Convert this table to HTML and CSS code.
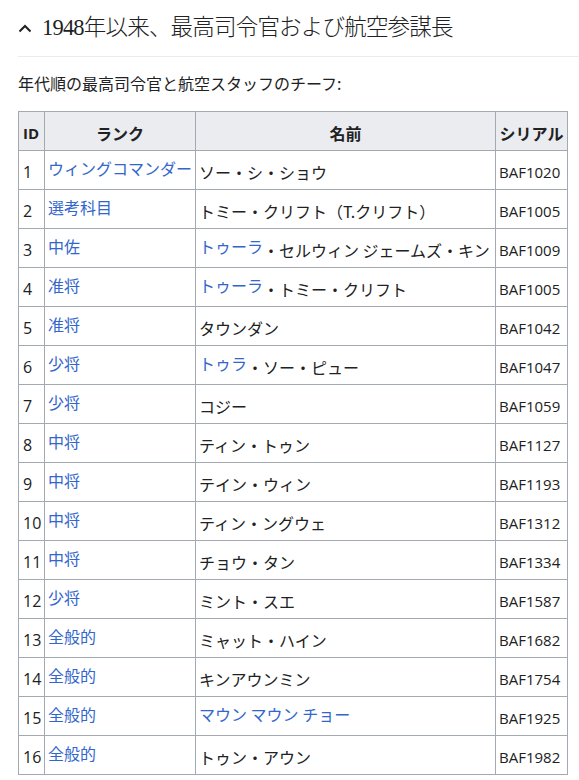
FILE: index.html
```html
<!DOCTYPE html>
<html lang="ja">
<head>
<meta charset="utf-8">
<title>1948年以来、最高司令官および航空参謀長</title>
<link rel="stylesheet" href="styles.css">
</head>
<body>
<div class="page">
  <h2 class="section-heading">
    <svg class="chevron" width="14" height="10" viewBox="0 0 14 10" aria-hidden="true"><polyline points="1.5,8.5 7,3 12.5,8.5" fill="none" stroke="#202122" stroke-width="2"/></svg>
    <span class="heading-text">1948年以来、最高司令官および航空参謀長</span>
  </h2>
  <p class="intro">年代順の最高司令官と航空スタッフのチーフ:</p>
  <table class="wikitable">
    <colgroup>
      <col class="c-id"><col class="c-rank"><col class="c-name"><col class="c-serial">
    </colgroup>
    <thead>
      <tr><th class="th-id">ID</th><th>ランク</th><th>名前</th><th>シリアル</th></tr>
    </thead>
    <tbody>
      <tr><td>1</td><td><a href="#">ウィングコマンダー</a></td><td>ソー・シ・ショウ</td><td>BAF1020</td></tr>
      <tr><td>2</td><td><a href="#">選考科目</a></td><td>トミー・クリフト（T.クリフト）</td><td>BAF1005</td></tr>
      <tr><td>3</td><td><a href="#">中佐</a></td><td><a href="#">トゥーラ</a>・セルウィン ジェームズ・キン</td><td>BAF1009</td></tr>
      <tr><td>4</td><td><a href="#">准将</a></td><td><a href="#">トゥーラ</a>・トミー・クリフト</td><td>BAF1005</td></tr>
      <tr><td>5</td><td><a href="#">准将</a></td><td>タウンダン</td><td>BAF1042</td></tr>
      <tr><td>6</td><td><a href="#">少将</a></td><td><a href="#">トゥラ</a>・ソー・ピュー</td><td>BAF1047</td></tr>
      <tr><td>7</td><td><a href="#">少将</a></td><td>コジー</td><td>BAF1059</td></tr>
      <tr><td>8</td><td><a href="#">中将</a></td><td>ティン・トゥン</td><td>BAF1127</td></tr>
      <tr><td>9</td><td><a href="#">中将</a></td><td>テイン・ウィン</td><td>BAF1193</td></tr>
      <tr><td>10</td><td><a href="#">中将</a></td><td>ティン・ングウェ</td><td>BAF1312</td></tr>
      <tr><td>11</td><td><a href="#">中将</a></td><td>チョウ・タン</td><td>BAF1334</td></tr>
      <tr><td>12</td><td><a href="#">少将</a></td><td>ミント・スエ</td><td>BAF1587</td></tr>
      <tr><td>13</td><td><a href="#">全般的</a></td><td>ミャット・ハイン</td><td>BAF1682</td></tr>
      <tr><td>14</td><td><a href="#">全般的</a></td><td>キンアウンミン</td><td>BAF1754</td></tr>
      <tr><td>15</td><td><a href="#">全般的</a></td><td><a href="#">マウン マウン チョー</a></td><td>BAF1925</td></tr>
      <tr><td>16</td><td><a href="#">全般的</a></td><td>トゥン・アウン</td><td>BAF1982</td></tr>
    </tbody>
  </table>
</div>
</body>
</html>
```

FILE: styles.css
```css
html, body {
  margin: 0;
  padding: 0;
  background: #ffffff;
}

body {
  font-family: "Open Sans", "Noto Sans CJK JP", sans-serif;
  color: #202122;
  font-size: 16px;
}

.page {
  padding: 0 0 0 18px;
}

.section-heading {
  display: flex;
  align-items: center;
  gap: 10px;
  margin: 0;
  padding: 0;
  height: 57px;
  box-sizing: border-box;
  border-bottom: 1px solid #eaecf0;
  font-weight: normal;
}

.chevron {
  flex: none;
  margin-top: 0;
}

.heading-text {
  font-family: "Liberation Serif", "Noto Sans CJK JP", serif;
  font-weight: 300;
  font-size: 22.5px;
  letter-spacing: -0.8px;
  line-height: 30px;
}

.intro {
  margin: 0;
  padding: 15px 0 0 0;
  height: 54px;
  box-sizing: border-box;
  line-height: 22px;
  font-family: "Noto Sans CJK JP", sans-serif;
}

.wikitable {
  border-collapse: collapse;
  table-layout: fixed;
  width: 549px;
  background: #ffffff;
}

.c-id { width: 26px; }
.c-rank { width: 151px; }
.c-name { width: 300px; }
.c-serial { width: 72px; }

.wikitable th,
.wikitable td {
  border: 1px solid #a2a9b1;
  height: 39px;
  box-sizing: border-box;
  padding: 9px 3px 5px 3px;
  line-height: 22px;
  white-space: nowrap;
  overflow: hidden;
  text-align: left;
  font-family: "Noto Sans CJK JP", sans-serif;
}

.wikitable td:first-child,
.wikitable td:last-child {
  font-family: "Open Sans", "Noto Sans CJK JP", sans-serif;
  font-size: 15px;
}

.wikitable td:first-child {
  font-size: 16px;
  padding-left: 4px;
  padding-right: 0;
}

.wikitable th {
  background: #eaecf0;
  font-weight: bold;
  text-align: center;
}

.wikitable th.th-id {
  text-align: left;
  padding-left: 4px;
  font-family: "Open Sans", sans-serif;
  font-size: 15px;
}

.wikitable a {
  color: #3366cc;
  text-decoration: none;
  line-height: 14px;
  vertical-align: 4px;
}
```
